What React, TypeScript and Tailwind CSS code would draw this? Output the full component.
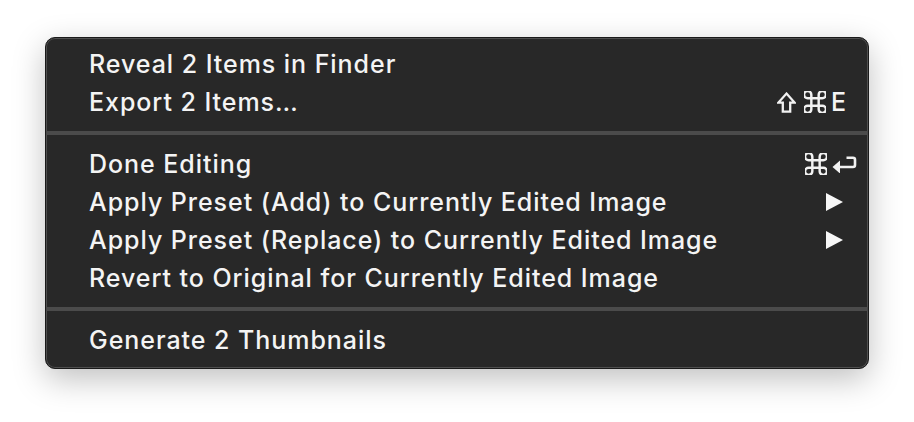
import React from "react";

const C = "#f2f2f2";

const ReturnIcon = () => (
  <svg width="25" height="17" viewBox="0 0 25 17" fill="none" className="block">
    <path d="M14.5 1.8 H21 A2 2 0 0 1 23 3.8 V9 A2 2 0 0 1 21 11 H7" stroke={C} strokeWidth="2.6" />
    <path d="M0.5 11 L8 4.5 V17.5 Z" fill={C} />
  </svg>
);

const CmdIcon = () => (
  <svg width="22" height="22" viewBox="3 3 18 18" fill="none" className="block">
    <path
      d="M15 6v12a3 3 0 1 0 3-3H6a3 3 0 1 0 3 3V6a3 3 0 1 0-3 3h12a3 3 0 1 0-3-3"
      stroke={C}
      strokeWidth="2"
    />
  </svg>
);

const ShiftIcon = () => (
  <svg width="19" height="21" viewBox="0 0 19 21" fill="none" className="block">
    <path d="M9.5 1.6 L17.6 10.6 H13.2 V19.6 H5.8 V10.6 H1.4 Z" stroke={C} strokeWidth="2.3" strokeLinejoin="miter" />
  </svg>
);

const Arrow = () => (
  <svg width="17" height="18" viewBox="0 0 17 18" className="block">
    <path d="M0 0 L17 9 L0 18 Z" fill="#f7f7f7" />
  </svg>
);

type Row = { label: string; right?: React.ReactNode };

const MenuRow = ({ label, right }: Row) => (
  <div className="flex h-[38px] items-center justify-between pl-[43px] pr-[22px]">
    <span className="whitespace-nowrap">{label}</span>
    {right && <span className="flex items-center">{right}</span>}
  </div>
);

const Sep = () => (
  <div className="flex h-[24px] items-center">
    <div className="h-[4px] w-full bg-[#4b4b4b]" />
  </div>
);

export default function App() {
  return (
    <div className="min-h-[422px] w-[914px] bg-white pl-[45px] pt-[37px]">
      <div
        className="w-[824px] rounded-[10px] border border-[#1a1a1a] bg-[#282828] pb-[9px] pt-[7px] text-[25px] font-medium leading-none tracking-[0.95px] text-[#f4f4f4] shadow-[0_10px_32px_rgba(0,0,0,0.25),inset_0_0_0_1px_#4f4f4f]"
        style={{ fontFamily: "Inter, 'Liberation Sans', sans-serif" }}
      >
        <MenuRow label="Reveal 2 Items in Finder" />
        <MenuRow
          label="Export 2 Items…"
          right={
            <span className="flex items-center">
              <ShiftIcon />
              <span className="ml-[8px]">
                <CmdIcon />
              </span>
              <span className="ml-[5px] tracking-normal">E</span>
            </span>
          }
        />
        <Sep />
        <MenuRow
          label="Done Editing"
          right={
            <span className="-mr-[11px] flex items-center gap-[5px]">
              <CmdIcon />
              <ReturnIcon />
            </span>
          }
        />
        <MenuRow label="Apply Preset (Add) to Currently Edited Image" right={<span className="pr-[3px]"><Arrow /></span>} />
        <MenuRow label="Apply Preset (Replace) to Currently Edited Image" right={<span className="pr-[3px]"><Arrow /></span>} />
        <MenuRow label="Revert to Original for Currently Edited Image" />
        <Sep />
        <MenuRow label="Generate 2 Thumbnails" />
      </div>
    </div>
  );
}
